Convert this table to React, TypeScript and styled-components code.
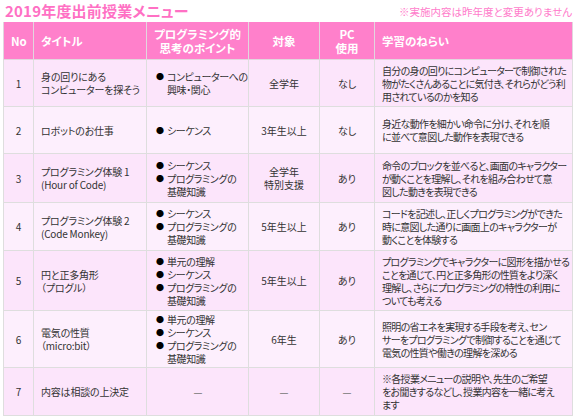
import styled, { createGlobalStyle } from 'styled-components'

const GlobalStyle = createGlobalStyle`
  html, body {
    margin: 0;
    padding: 0;
    background: #ffffff;
  }
  body {
    font-family: "Noto Sans CJK JP", "Noto Sans", sans-serif;
    font-feature-settings: "palt";
    color: #333333;
  }
`

const Page = styled.div`
  width: 580px;
  height: 419px;
  padding: 0 8px 0 3px;
  box-sizing: border-box;
  overflow: hidden;
`

const TitleBar = styled.div`
  display: flex;
  justify-content: space-between;
  align-items: center;
  height: 22px;
  padding: 0 0 0 2px;
`

const Heading = styled.h1`
  margin: 0;
  font-size: 15px;
  font-weight: 700;
  color: #ff70c4;
  letter-spacing: 0.2px;
  line-height: 18px;
`

const Note = styled.span`
  font-size: 10.5px;
  color: #ff7ccb;
  line-height: 14px;
  margin-top: 2px;
`

const Table = styled.table`
  width: 569px;
  border-collapse: collapse;
  table-layout: fixed;
  font-size: 10px;
  line-height: 13px;
`

const HeadCell = styled.th<{ $align?: string }>`
  background: #ff80cb;
  color: #ffffff;
  font-weight: 700;
  font-size: 11.5px;
  line-height: 14px;
  height: 37px;
  padding: 0 7px;
  text-align: ${(p) => p.$align || 'center'};
  border: 1px solid #e2d6de;
  border-top: none;
`

const Row = styled.tr<{ $odd: boolean; $h: number }>`
  background: ${(p) => (p.$odd ? '#fce5fb' : '#fdeffd')};
  height: ${(p) => p.$h}px;
`

const Cell = styled.td<{ $align?: string; $spacing?: number }>`
  border: 1px solid #dedede;
  padding: 0 7px;
  text-align: ${(p) => p.$align || 'left'};
  letter-spacing: ${(p) => (p.$spacing ?? -0.7)}px;
  vertical-align: middle;
  white-space: nowrap;
  overflow: hidden;
`

const Points = styled.ul`
  margin: 0;
  padding: 0 0 0 2px;
  list-style: none;
`

const Point = styled.li`
  display: flex;
  align-items: flex-start;
`

const Dot = styled.span`
  width: 11px;
  flex: none;
  font-size: 8px;
  line-height: 13px;
  color: #000000;
`

const Dash = styled.span`
  color: #777777;
`

type Item = {
  no: number
  title: string[]
  points: string[][]
  target: string[]
  pc: string
  aim: string[]
  h: number
}

const items: Item[] = [
  {
    no: 1,
    title: ['身の回りにある', 'コンピューターを探そう'],
    points: [['コンピューターへの', '興味・関心']],
    target: ['全学年'],
    pc: 'なし',
    aim: [
      '自分の身の回りにコンピューターで制御された',
      '物がたくさんあることに気付き、それらがどう利',
      '用されているのかを知る',
    ],
    h: 47,
  },
  {
    no: 2,
    title: ['ロボットのお仕事'],
    points: [['シーケンス']],
    target: ['3年生以上'],
    pc: 'なし',
    aim: ['身近な動作を細かい命令に分け、それを順', 'に並べて意図した動作を表現できる'],
    h: 47,
  },
  {
    no: 3,
    title: ['プログラミング体験 1', '(Hour of Code)'],
    points: [['シーケンス'], ['プログラミングの', '基礎知識']],
    target: ['全学年', '特別支援'],
    pc: 'あり',
    aim: [
      '命令のブロックを並べると、画面のキャラクター',
      'が動くことを理解し、それを組み合わせて意',
      '図した動きを表現できる',
    ],
    h: 49,
  },
  {
    no: 4,
    title: ['プログラミング体験 2', '(Code Monkey)'],
    points: [['シーケンス'], ['プログラミングの', '基礎知識']],
    target: ['5年生以上'],
    pc: 'あり',
    aim: [
      'コードを記述し、正しくプログラミングができた',
      '時に意図した通りに画面上のキャラクターが',
      '動くことを体験する',
    ],
    h: 48,
  },
  {
    no: 5,
    title: ['円と正多角形', '（プログル）'],
    points: [['単元の理解'], ['シーケンス'], ['プログラミングの', '基礎知識']],
    target: ['5年生以上'],
    pc: 'あり',
    aim: [
      'プログラミングでキャラクターに図形を描かせる',
      'ことを通じて、円と正多角形の性質をより深く',
      '理解し、さらにプログラミングの特性の利用に',
      'ついても考える',
    ],
    h: 60,
  },
  {
    no: 6,
    title: ['電気の性質', '（micro:bit）'],
    points: [['単元の理解'], ['シーケンス'], ['プログラミングの', '基礎知識']],
    target: ['6年生'],
    pc: 'あり',
    aim: [
      '照明の省エネを実現する手段を考え、セン',
      'サーをプログラミングで制御することを通じて',
      '電気の性質や働きの理解を深める',
    ],
    h: 57,
  },
  {
    no: 7,
    title: ['内容は相談の上決定'],
    points: [],
    target: [],
    pc: '',
    aim: [
      '※各授業メニューの説明や、先生のご希望',
      'をお聞きするなどし、授業内容を一緒に考え',
      'ます',
    ],
    h: 48,
  },
]

const Lines = ({ lines }: { lines: string[] }) => (
  <>
    {lines.map((l, i) => (
      <div key={i}>{l}</div>
    ))}
  </>
)

export default function App() {
  return (
    <>
      <GlobalStyle />
      <Page>
        <TitleBar>
          <Heading>2019年度出前授業メニュー</Heading>
          <Note>※実施内容は昨年度と変更ありません</Note>
        </TitleBar>
        <Table>
          <colgroup>
            <col style={{ width: 30 }} />
            <col style={{ width: 113 }} />
            <col style={{ width: 102 }} />
            <col style={{ width: 71 }} />
            <col style={{ width: 55 }} />
            <col style={{ width: 198 }} />
          </colgroup>
          <thead>
            <tr>
              <HeadCell>No</HeadCell>
              <HeadCell $align="left">タイトル</HeadCell>
              <HeadCell>
                プログラミング的
                <br />
                思考のポイント
              </HeadCell>
              <HeadCell>対象</HeadCell>
              <HeadCell>
                PC
                <br />
                使用
              </HeadCell>
              <HeadCell $align="left">学習のねらい</HeadCell>
            </tr>
          </thead>
          <tbody>
            {items.map((it) => (
              <Row key={it.no} $odd={it.no % 2 === 1} $h={it.h}>
                <Cell $align="center" $spacing={0}>
                  {it.no}
                </Cell>
                <Cell $spacing={-0.2}>
                  <Lines lines={it.title} />
                </Cell>
                {it.points.length ? (
                  <Cell $spacing={-0.4}>
                    <Points>
                      {it.points.map((p, i) => (
                        <Point key={i}>
                          <Dot>●</Dot>
                          <div>
                            <Lines lines={p} />
                          </div>
                        </Point>
                      ))}
                    </Points>
                  </Cell>
                ) : (
                  <Cell $align="center">
                    <Dash>—</Dash>
                  </Cell>
                )}
                <Cell $align="center" $spacing={0}>
                  {it.target.length ? <Lines lines={it.target} /> : <Dash>—</Dash>}
                </Cell>
                <Cell $align="center" $spacing={0}>
                  {it.pc || <Dash>—</Dash>}
                </Cell>
                <Cell>
                  <Lines lines={it.aim} />
                </Cell>
              </Row>
            ))}
          </tbody>
        </Table>
      </Page>
    </>
  )
}
